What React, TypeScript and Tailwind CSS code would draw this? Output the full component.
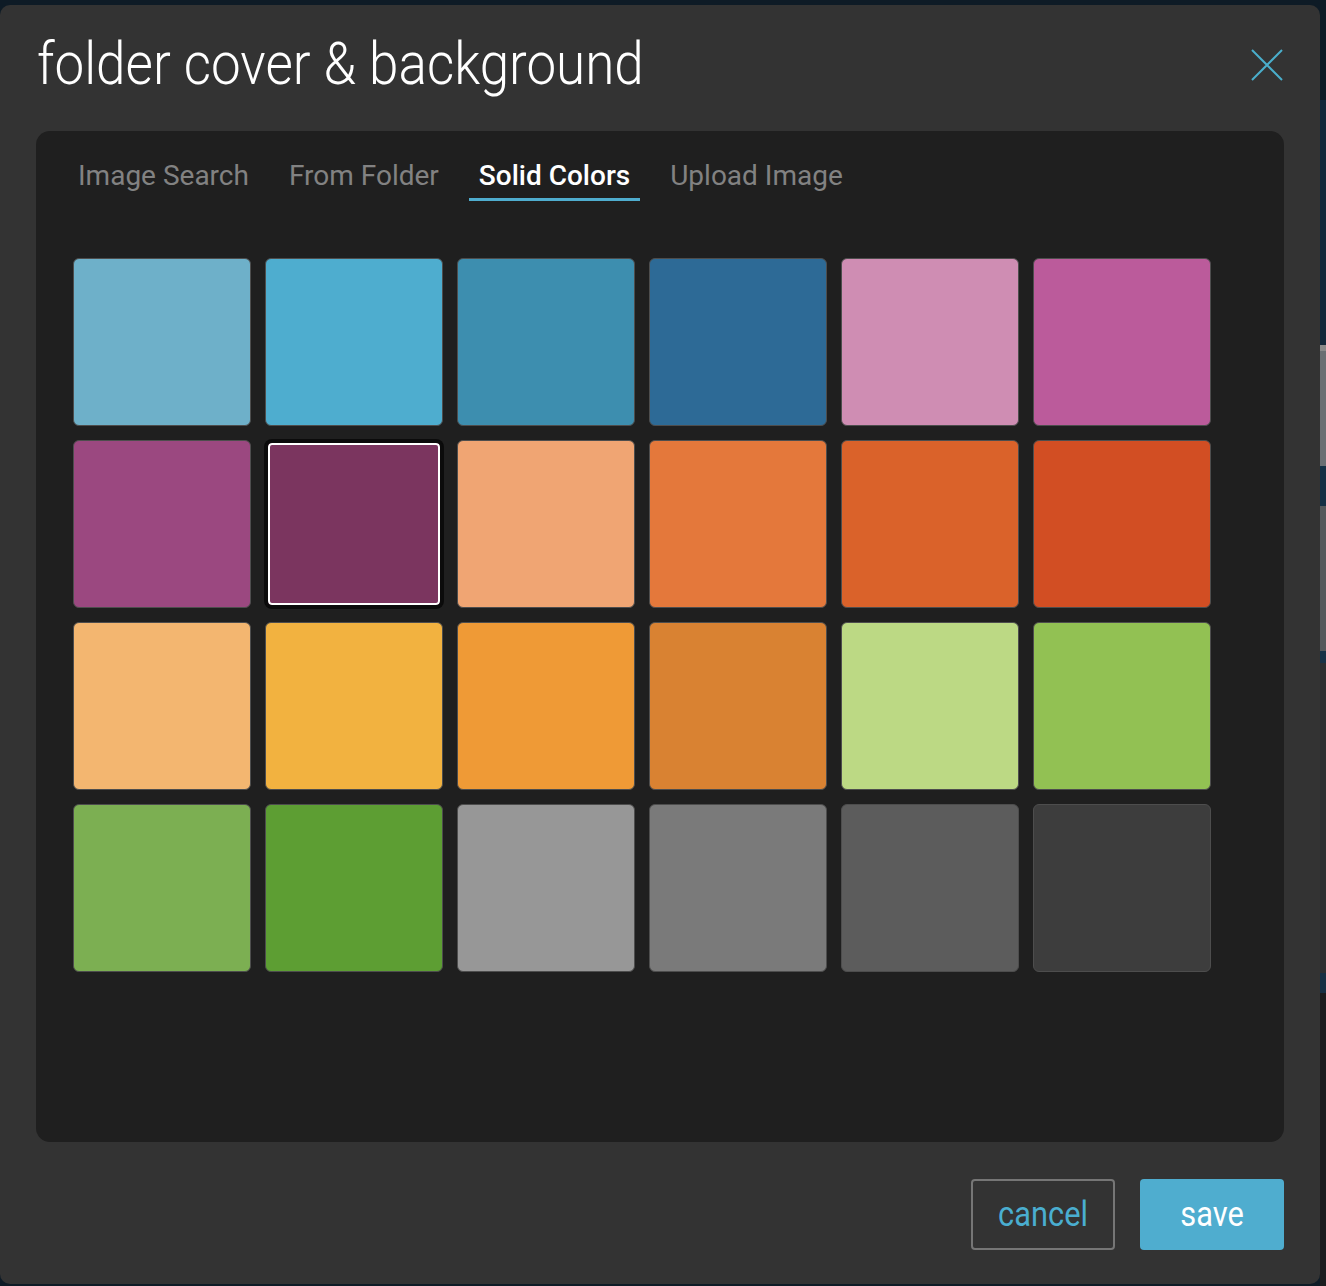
import React, { useState } from 'react';

const SWATCHES = [
  '#6eb0c9', '#4eadcf', '#3d8eaf', '#2d6a96', '#cf8db3', '#bb5b9b',
  '#9b4880', '#7b355f', '#f0a573', '#e4783b', '#da622a', '#d24e23',
  '#f3b670', '#f2b240', '#ef9a36', '#d98232', '#bcd984', '#92c153',
  '#7caf52', '#5d9e33', '#979797', '#7a7a7a', '#5c5c5c', '#3d3d3d',
];

const TABS = ['Image Search', 'From Folder', 'Solid Colors', 'Upload Image'];

function CloseIcon() {
  return (
    <svg width="32" height="32" viewBox="0 0 32 32" fill="none" stroke="#4aaecb" strokeWidth="2">
      <path d="M1 1 L31 31 M31 1 L1 31" />
    </svg>
  );
}

export default function App() {
  const [tab, setTab] = useState('Solid Colors');
  const [selected, setSelected] = useState(7);

  return (
    <div className="w-[1326px] h-[1286px] bg-[#0e1b26] flex overflow-hidden" style={{ fontFamily: 'Roboto, "Liberation Sans", sans-serif' }}>
      <div className="w-[1320px] h-[1279px] mt-[5px] bg-[#333333] rounded-[10px] px-[36px] flex flex-col shrink-0">

        {/* header */}
        <div className="h-[126px] pt-[29px] flex items-start justify-between">
          <h1 className="pl-[1px] text-[60px] leading-[60px] font-light text-white whitespace-nowrap origin-left scale-x-[0.883]">
            folder cover &amp; background
          </h1>
          <button className="mt-[15px] mr-[1px]">
            <CloseIcon />
          </button>
        </div>

        {/* picker panel */}
        <div className="h-[1011px] bg-[#1f1f1f] rounded-[14px] flex flex-col">
          <div className="pl-[32px] pt-[27px] flex gap-[20px]">
            {TABS.map((t) => (
              <button
                key={t}
                onClick={() => setTab(t)}
                className={
                  'px-[10px] pb-[4px] border-b-[3px] text-[28px] leading-[36px] whitespace-nowrap ' +
                  (t === tab ? 'border-[#4fadcf] text-white font-medium' : 'border-transparent text-[#828282]')
                }
              >
                {t}
              </button>
            ))}
          </div>

          <div className="pl-[37px] mt-[57px] grid grid-cols-[repeat(6,178px)] auto-rows-[168px] gap-[14px]">
            {SWATCHES.map((c, i) => (
              <button
                key={c + i}
                onClick={() => setSelected(i)}
                className={
                  i === selected
                    ? 'rounded-[7px] border-[3px] border-[#0b0b0b] shadow-[inset_0_0_0_2px_#ffffff,0_0_0_1px_#0b0b0b]'
                    : 'rounded-[6px] border border-[#4d4d4d]'
                }
                style={{ backgroundColor: c }}
              />
            ))}
          </div>
        </div>

        {/* footer */}
        <div className="mt-[37px] flex justify-end gap-[25px]">
          <button className="w-[144px] h-[71px] rounded-[4px] border-2 border-[#767676] text-[#4aaed0] text-[35px] leading-none">
            <span className="inline-block scale-x-[0.88]">cancel</span>
          </button>
          <button className="w-[144px] h-[71px] rounded-[4px] bg-[#4fadcf] text-white text-[35px] leading-none">
            <span className="inline-block scale-x-[0.88]">save</span>
          </button>
        </div>
      </div>

      {/* backdrop peeking at the right */}
      <div className="flex-1 flex flex-col pt-[100px]">
        <div className="h-[245px] bg-[#13283a]" />
        <div className="h-[6px] bg-[#8a8a8a]" />
        <div className="h-[115px] bg-[#6b6f73]" />
        <div className="h-[40px] bg-[#153045]" />
        <div className="h-[145px] bg-[#55595c]" />
        <div className="h-[12px] bg-[#173247]" />
        <div className="h-[310px] bg-[#2c2f31]" />
        <div className="h-[20px] bg-[#163044]" />
        <div className="flex-1 bg-[#1b1d1f]" />
      </div>
    </div>
  );
}
